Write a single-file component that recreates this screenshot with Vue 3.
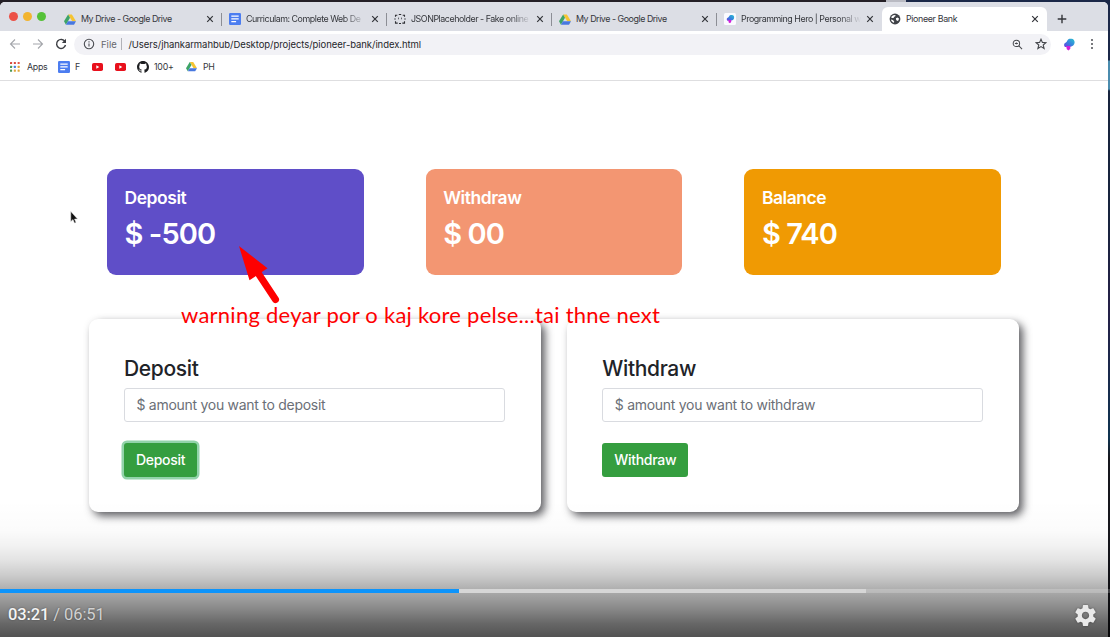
<script setup>
const tabs = [
  { title: 'My Drive - Google Drive', icon: 'drive', w: 91 },
  { title: 'Curriculam: Complete Web De', icon: 'doc', w: 121 },
  { title: 'JSONPlaceholder - Fake online', icon: 'json', w: 121 },
  { title: 'My Drive - Google Drive', icon: 'drive', w: 91 },
  { title: 'Programming Hero | Personal w', icon: 'hero', w: 121 },
  { title: 'Pioneer Bank', icon: 'globe', active: true },
]
const bookmarks = [
  { label: 'Apps', icon: 'apps', cls: 'b-apps' },
  { label: 'F', icon: 'doc', cls: 'b-doc' },
  { label: '', icon: 'yt', cls: 'b-yt' },
  { label: '', icon: 'yt', cls: 'b-yt2' },
  { label: '100+', icon: 'github', cls: 'b-git' },
  { label: 'PH', icon: 'drive', cls: 'b-drive' },
]
const cards = [
  { title: 'Deposit', amount: '-500', cls: 'purple' },
  { title: 'Withdraw', amount: '00', cls: 'salmon' },
  { title: 'Balance', amount: '740', cls: 'orange' },
]
const forms = [
  { title: 'Deposit', hint: '$ amount you want to deposit', focus: true },
  { title: 'Withdraw', hint: '$ amount you want to withdraw' },
]
const dots = [0, 1, 2].flatMap((r) => [0, 1, 2].map((c) => ({ r, c })))
const dotColors = ['#d9483b', '#d9483b', '#e0584b', '#4c9a58', '#4a7fe0', '#e0a83b', '#4c9a58', '#e0a83b', '#e0a83b']
</script>

<template>
  <div class="screen">
    <svg class="defs" width="0" height="0">
      <symbol id="i-drive" viewBox="0 0 24 22">
        <path d="M8.2 1h7.6L24 14.6h-7.6z" fill="#f5c431" />
        <path d="M8.2 1L0 14.6 3.9 21.4 12 7.6z" fill="#3da467" />
        <path d="M7.9 14.6H24l-4 6.8H3.9z" fill="#4878e0" />
      </symbol>
      <symbol id="i-doc" viewBox="0 0 12 12">
        <rect width="12" height="12" rx="1.2" fill="#4c7df0" />
        <path d="M2.3 3.2h7.4M2.3 5.9h7.4M2.3 8.6h4.8" stroke="#fff" stroke-width="1.2" />
      </symbol>
      <symbol id="i-json" viewBox="0 0 12 12">
        <path d="M1.500 3.800V2.200h1.800M4.800 1.500h2.400M8.700 2.200h1.800v1.600M1.500 8.200v1.900h2.200M5 10.500h2M8.300 10.100h2.200V8.200M.3 6h1.400M10.300 6h1.400" fill="none" stroke="#2d2e33" stroke-width="1.1" />
        <path d="M4.500 4.600v1.700M7.500 4.600v1.700" stroke="#55575c" stroke-width=".9" />
      </symbol>
      <linearGradient id="heroGrad" x1="0" y1="1" x2="1" y2="0">
        <stop offset="0" stop-color="#6a3fe0" />
        <stop offset=".5" stop-color="#3585dd" />
        <stop offset="1" stop-color="#2cc4cf" />
      </linearGradient>
      <symbol id="i-heroglyph" viewBox="0 0 12 12">
        <path d="M6.500.2h2C10.500.2 11.800 2 11.600 4.300 11.300 6.500 9.600 8.200 7.400 8.200L2 8.600C.6 7.200.8 5 2.400 4.300 4.200 3.700 4.200.6 6.500.2z" fill="url(#heroGrad)" />
        <path d="M3.200 7.500h4.100v2.800L5.600 12 3.800 10.800z" fill="#d31fd8" />
      </symbol>
      <symbol id="i-hero" viewBox="0 0 12 12">
        <rect width="12" height="12" rx="1.500" fill="#fbfbff" />
        <use href="#i-heroglyph" x="2" y="1.500" width="8.500" height="9" />
      </symbol>
      <symbol id="i-globe" viewBox="0 0 12 12">
        <circle cx="6" cy="6" r="5.400" fill="#404348" />
        <path d="M2.100 4.400C2.700 3 4 2 5.500 1.900L6.800 2.400 6.200 3.300 5 4 4.600 5.100 3.300 5z" fill="#fff" />
        <path d="M6.900 5.200l1.600-.6L10 5.500 9.600 7.200 8.300 7.900 7.200 7z" fill="#fff" />
        <path d="M2 6.500L3.900 7l1.300 1.400L4.900 9.800C3.400 9.400 2.200 8.100 2 6.500z" fill="#fff" />
      </symbol>
      <symbol id="i-apps" viewBox="0 0 10 10">
        <rect v-for="(d, i) in dots" :key="i" :x="d.c * 3.8" :y="d.r * 3.8" width="2.1" height="2.1" rx=".5" :fill="dotColors[i]" />
      </symbol>
      <symbol id="i-yt" viewBox="0 0 11 8">
        <rect width="11" height="8" rx="1.800" fill="#e8101c" />
        <path d="M4.300 2.300v3.400L7.300 4z" fill="#fff" />
      </symbol>
      <symbol id="i-github" viewBox="0 0 16 16">
        <path fill="#1d1e21" d="M8 0C3.580 0 0 3.580 0 8c0 3.540 2.290 6.530 5.470 7.590.4.070.55-.17.55-.38 0-.19-.01-.82-.01-1.490-2.010.37-2.530-.49-2.690-.94-.09-.23-.48-.94-.82-1.130-.28-.15-.68-.52-.01-.53.63-.01 1.080.58 1.230.82.72 1.210 1.870.87 2.330.66.070-.52.28-.87.51-1.070-1.780-.2-3.640-.89-3.640-3.950 0-.87.31-1.590.82-2.150-.08-.2-.36-1.020.08-2.120 0 0 .67-.21 2.200.82a7.700 7.700 0 0 1 4 0c1.530-1.040 2.200-.82 2.200-.82.44 1.100.16 1.920.08 2.120.51.56.82 1.270.82 2.150 0 3.070-1.870 3.750-3.650 3.950.29.25.54.73.54 1.480 0 1.070-.01 1.930-.01 2.200 0 .21.15.46.55.38A8.010 8.010 0 0 0 16 8c0-4.420-3.580-8-8-8z" />
      </symbol>
    </svg>

    <div class="window">
      <header class="tabstrip">
        <div class="lights"><i class="red" /><i class="yellow" /><i class="green" /></div>
        <div v-for="(t, i) in tabs" :key="i" class="tab" :class="{ active: t.active, last: i === 4 }">
          <svg class="fav" :class="'fav-' + t.icon"><use :href="'#i-' + t.icon" /></svg>
          <span class="title" :class="{ fade: t.w > 100 }">{{ t.title }}</span>
          <svg class="close" viewBox="0 0 8 8"><path d="M1.200 1.200l5.600 5.600M6.800 1.200L1.200 6.800" /></svg>
        </div>
        <svg class="plus" viewBox="0 0 10 10"><path d="M5 .7v8.600M.7 5h8.600" /></svg>
      </header>

      <div class="toolbar">
        <svg class="nav" viewBox="0 0 12 12"><path d="M11 6H1.500M6 1.500L1.500 6 6 10.500" /></svg>
        <svg class="nav" viewBox="0 0 12 12"><path d="M1 6h9.500M6 1.500L10.500 6 6 10.500" /></svg>
        <svg class="nav reload" viewBox="0 0 12 12"><path d="M10 3.600A4.500 4.500 0 1 0 10.500 7" /><path class="tip" d="M11 .8v4.200H6.800z" /></svg>
        <div class="omnibox">
          <svg class="info" viewBox="0 0 12 12"><circle cx="6" cy="6" r="4.700" /><path d="M6 5.400v3.200M6 3.200v1.200" /></svg>
          <span class="file">File</span>
          <i class="bar" />
          <span class="url">/Users/jhankarmahbub/Desktop/projects/pioneer-bank/index.html</span>
          <svg class="mag" viewBox="0 0 12 12"><circle cx="4.800" cy="4.800" r="3.500" /><path d="M7.500 7.500L11 11M3.200 4.800h3.200M4.800 3.900v1.800" /></svg>
          <svg class="star" viewBox="0 0 12 12"><path d="M6 1.200l1.400 3.200 3.500.3-2.700 2.300.9 3.500L6 8.600l-3.100 1.900.9-3.500L1.100 4.700l3.500-.3z" /></svg>
        </div>
        <svg class="ext"><use href="#i-heroglyph" /></svg>
        <svg class="more" viewBox="0 0 4 12"><circle cx="2" cy="2" r="1" /><circle cx="2" cy="6" r="1" /><circle cx="2" cy="10" r="1" /></svg>
      </div>

      <div class="bookmarks">
        <div v-for="b in bookmarks" :key="b.cls" class="bm" :class="b.cls">
          <svg><use :href="'#i-' + b.icon" /></svg><span v-if="b.label">{{ b.label }}</span>
        </div>
      </div>

      <main class="page">
        <section class="cards">
          <article v-for="c in cards" :key="c.title" class="card" :class="c.cls">
            <h5>{{ c.title }}</h5>
            <h2>$ {{ c.amount }}</h2>
          </article>
        </section>
        <section class="forms">
          <article v-for="f in forms" :key="f.title" class="panel">
            <h4>{{ f.title }}</h4>
            <div class="field">{{ f.hint }}</div>
            <button :class="{ focus: f.focus }">{{ f.title }}</button>
          </article>
        </section>
      </main>
    </div>
    <div class="edge" />

    <svg class="cursor" viewBox="0 0 8 13"><path d="M.8.500v10l2.200-2 1.500 3.600 1.500-.7-1.500-3.400h3z" /></svg>
    <svg class="arrow" viewBox="0 0 50 66"><path d="M18 25.500L36.500 53.500" /><path class="head" d="M0 0l28.500 22.300-18 12z" /></svg>
    <div class="note">warning deyar por o kaj kore pelse...tai thne next</div>

    <div class="shade" />
    <div class="player">
      <div class="track"><div class="loaded" /><div class="played" /></div>
      <div class="controls">
        <div class="time"><span class="now">03:21</span> / 06:51</div>
        <svg class="gear" viewBox="0 0 24 24"><path d="M19.430 12.980c.04-.32.07-.64.07-.98s-.03-.66-.07-.98l2.110-1.650c.19-.15.24-.42.12-.64l-2-3.460c-.12-.22-.39-.3-.61-.22l-2.490 1c-.52-.4-1.080-.73-1.690-.98l-.38-2.650C14.460 2.180 14.250 2 14 2h-4c-.25 0-.46.18-.49.42l-.38 2.650c-.61.25-1.170.59-1.690.98l-2.490-1c-.23-.09-.49 0-.61.22l-2 3.460c-.13.22-.07.49.12.64l2.110 1.650c-.04.32-.07.65-.07.98s.03.66.07.98l-2.110 1.650c-.19.15-.24.42-.12.64l2 3.460c.12.22.39.3.61.22l2.490-1c.52.4 1.080.73 1.690.98l.38 2.650c.03.24.24.42.49.42h4c.25 0 .46-.18.49-.42l.38-2.650c.61-.25 1.170-.59 1.690-.98l2.490 1c.23.09.49 0 .61-.22l2-3.460c.12-.22.07-.49-.12-.64l-2.110-1.650zM12 15.500c-1.930 0-3.500-1.570-3.500-3.500s1.570-3.500 3.500-3.500 3.500 1.570 3.500 3.500-1.570 3.500-3.500 3.500z" /></svg>
      </div>
    </div>
  </div>
</template>

<style>
body { margin: 0; overflow: hidden; }
</style>

<style scoped>
* { box-sizing: border-box; }
.screen {
  position: relative; width: 1110px; height: 637px; overflow: hidden; padding-top: 2px;
  background: linear-gradient(90deg, #241f26 0 886px, #b9bac2 886px 906px, #1b2848 906px);
  font-family: Inter, "Liberation Sans", sans-serif;
}
.defs { position: absolute; }
.window { width: 1107.500px; height: 635px; background: #fff; border-radius: 5px 5px 0 0; display: flex; flex-direction: column; overflow: hidden; }
.edge {
  position: absolute; right: 0; top: 8px; width: 2.500px; bottom: 0;
  background: linear-gradient(#1b2848 0 52px, #4b8cae 53px 81px, #18243e 83px 210px, #252047 300px, #0f3350 430px, #17171d 450px);
}
.tabstrip { height: 29px; background: #dcdee5; display: flex; align-items: flex-end; flex: none; }
.lights { width: 57px; height: 29px; display: flex; gap: 5px; padding: 10px 0 0 9px; }
.lights i { width: 9px; height: 9px; border-radius: 50%; }
.red { background: #ec5147; } .yellow { background: #f2b42f; } .green { background: #55c138; }
.tab { width: 165px; height: 24px; display: flex; align-items: center; padding: 0 7px 0 7px; position: relative; }
.tab:not(.active):not(.last)::after { content: ''; position: absolute; right: 0; top: 6px; width: 1px; height: 13px; background: #8c8e95; }
.active { background: #fff; border-radius: 6px 6px 0 0; }
.fav { width: 12px; height: 12px; margin-right: 5px; flex: none; }
.fav-drive { height: 11px; }
.title { flex: 1; min-width: 0; overflow: hidden; white-space: nowrap; font-size: 8.900px; line-height: 14px; color: #34363b; letter-spacing: -.46px; }
.active .title { letter-spacing: -.36px; }
.fade { -webkit-mask-image: linear-gradient(90deg, #000 98px, transparent 120px); mask-image: linear-gradient(90deg, #000 98px, transparent 120px); }
.close { width: 8px; height: 8px; margin: 0 1px 0 3px; flex: none; fill: none; stroke: #33353a; stroke-width: 1.200; }
.plus { width: 10px; height: 10px; margin: 0 0 7px 10px; fill: none; stroke: #33353a; stroke-width: 1.400; }
.toolbar { height: 26px; display: flex; align-items: center; padding-left: 9px; flex: none; }
.nav { width: 12px; height: 12px; margin-right: 11px; fill: none; stroke: #a4a6ab; stroke-width: 1.100; flex: none; }
.reload { stroke: #3c3e43; stroke-width: 1.400; margin-right: 7px; }
.reload .tip { fill: #3c3e43; stroke: none; }
.omnibox { width: 977px; height: 21px; border-radius: 11px; background: #f2f2f6; display: flex; align-items: center; padding-left: 9px; font-size: 9.500px; color: #25262a; }
.info { width: 12px; height: 12px; fill: none; stroke: #4c4e53; stroke-width: 1.100; margin-right: 6px; }
.file { color: #66686d; width: 20px; }
.bar { width: 1px; height: 12px; background: #b1b2b8; margin-right: 6.500px; }
.url { width: 300px; white-space: nowrap; letter-spacing: -.06px; }
.mag, .star { width: 11px; height: 11px; fill: none; stroke: #45474c; stroke-width: 1.100; }
.mag { margin-left: auto; margin-right: 12px; }
.star { margin-right: 4px; width: 12px; height: 12px; }
.ext { width: 12px; height: 13px; margin-left: 12px; }
.more { width: 4px; height: 12px; margin-left: 15px; fill: #4c4e53; }
.bookmarks { height: 23.500px; border-bottom: 1px solid #dedee0; display: flex; align-items: center; padding: 0 0 3px 10px; font-size: 8.800px; color: #34363b; flex: none; }
.bm { display: flex; align-items: center; white-space: nowrap; letter-spacing: -.25px; }
.b-apps { width: 48px; gap: 7px; } .b-apps svg { width: 10px; height: 10px; }
.b-doc { width: 34px; gap: 5px; } .b-doc svg { width: 12px; height: 12px; }
.b-yt { width: 23px; } .b-yt2 { width: 22px; }
.b-yt svg, .b-yt2 svg { width: 11px; height: 8px; }
.b-git { width: 49px; gap: 5px; } .b-git svg { width: 12px; height: 12px; }
.b-drive { gap: 6px; } .b-drive svg { width: 11px; height: 11px; }
.page { flex: 1; padding: 88.500px 0 0 89px; color: #212328; }
h2, h4, h5 { margin: 0; }
.cards { display: grid; grid-template-columns: repeat(3, 256.600px); gap: 62.100px; padding-left: 18px; }
.card { height: 105.600px; border-radius: 9px; padding: 18px 17.500px; color: #fff; }
.purple { background: #5f4ec8; } .salmon { background: #f39672; } .orange { background: #f09a03; }
h5 { font-size: 17.500px; line-height: 21px; font-weight: 600; letter-spacing: -.45px; }
h2 { font-size: 29px; line-height: 34px; font-weight: 600; letter-spacing: -.9px; margin-top: 9px; white-space: nowrap; }
.forms { display: grid; grid-template-columns: repeat(2, 451.800px); gap: 26.500px; margin-top: 44.700px; }
.panel { height: 192.700px; border-radius: 9px; background: #fff; box-shadow: 4px 4px 9px rgba(40, 40, 45, .75); padding: 37px 35px 0; }
h4 { font-size: 21px; line-height: 26px; font-weight: 500; letter-spacing: -.35px; }
.field { width: 381px; height: 33.300px; margin-top: 6px; border: 1px solid #d9dbe0; border-radius: 3px; padding-left: 11.500px; font-size: 14px; line-height: 32px; color: #6b6f77; letter-spacing: -.28px; }
button { display: block; height: 34px; margin-top: 21.300px; border: 0; border-radius: 3px; background: #359e3f; color: #fff; padding: 0 12px; font: 500 14px/34px Inter, sans-serif; letter-spacing: -.3px; }
.focus { box-shadow: 0 0 0 2.500px #92d3aa; }
.cursor { position: absolute; left: 70px; top: 211px; width: 8px; height: 13px; fill: #111; stroke: #ddd; stroke-width: .5; }
.arrow { position: absolute; left: 239px; top: 246px; width: 50px; height: 66px; fill: none; stroke: #fe0000; stroke-width: 7; stroke-linecap: round; }
.arrow .head { fill: #fe0000; stroke: none; }
.note { position: absolute; left: 181px; top: 301px; font: 400 22px/28px Lato, sans-serif; letter-spacing: .25px; color: #fe0000; white-space: nowrap; }
.shade {
  position: absolute; inset: 500px 0 0 0;
  background: linear-gradient(rgba(0,0,0,0), rgba(0,0,0,.015) 30px, rgba(0,0,0,.05) 45px, rgba(0,0,0,.11) 60px, rgba(0,0,0,.2) 75px, rgba(0,0,0,.32) 90px, rgba(0,0,0,.46) 108px, rgba(0,0,0,.6) 124px, rgba(0,0,0,.68) 137px);
}
.player { position: absolute; left: 0; right: 0; bottom: 0; height: 48px; }
.track { position: relative; height: 4px; background: rgba(255,255,255,.2); }
.loaded, .played { position: absolute; left: 0; top: 0; height: 4px; }
.loaded { width: 866px; background: #d6d6d6; }
.played { width: 459px; background: #0d94fb; }
.controls { height: 44px; display: flex; align-items: center; justify-content: space-between; padding: 0 12px 0 8px; }
.time { font: 16.500px/20px Roboto, sans-serif; color: #d2d2d2; white-space: nowrap; padding-bottom: 1px; text-shadow: 0 0 2px rgba(0,0,0,.4); letter-spacing: -.1px; }
.now { color: #f4f4f4; font-weight: 500; }
.gear { width: 25px; height: 25px; fill: #e9e9e9; filter: drop-shadow(0 0 1px rgba(0,0,0,.4)); }
</style>
